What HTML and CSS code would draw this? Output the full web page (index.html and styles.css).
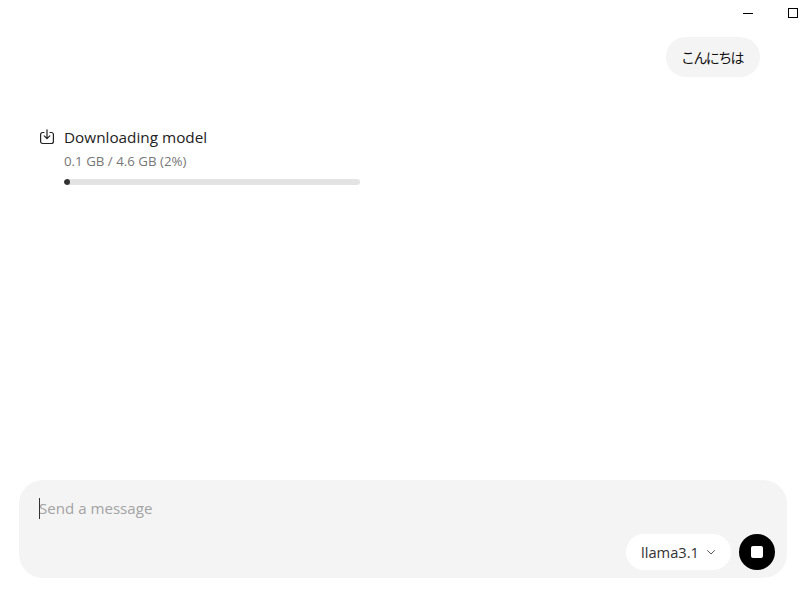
FILE: index.html
```html
<!DOCTYPE html>
<html lang="en">
  <head>
    <meta charset="UTF-8" />
    <meta name="viewport" content="width=device-width, initial-scale=1.0" />
    <title>Chat</title>
    <link rel="stylesheet" href="styles.css">
  </head>
  <body>
    <div class="titlebar">
      <span class="win-min"></span>
      <span class="win-max"></span>
    </div>

    <main class="messages">
      <div class="bubble">こんにちは</div>

      <div class="download">
        <svg class="download-icon" width="16" height="16" viewBox="0 0 16 16" fill="none" stroke="#222" stroke-width="1.2" stroke-linecap="round" stroke-linejoin="round">
          <path d="M5 3.5H3.6A2 2 0 0 0 1.6 5.5v7a2 2 0 0 0 2 2h8.8a2 2 0 0 0 2-2v-7a2 2 0 0 0-2-2H11" />
          <path d="M8 .8v8.6M5.2 6.8 8 9.6l2.8-2.8" />
        </svg>
        <div class="download-info">
          <div class="download-title">Downloading model</div>
          <div class="download-size">0.1 GB / 4.6 GB (2%)</div>
          <div class="progress"><div class="progress-fill" style="width: 2%"></div></div>
        </div>
      </div>
    </main>

    <form class="composer">
      <div class="prompt"><span class="caret"></span>Send a message</div>
      <div class="composer-actions">
        <button class="model" type="button">
          llama3.1
          <svg width="10" height="10" viewBox="0 0 10 10" fill="none" stroke="#555" stroke-width="1" stroke-linecap="round" stroke-linejoin="round">
            <path d="M1.5 3.5 5 7l3.5-3.5" />
          </svg>
        </button>
        <button class="stop" type="button"><span class="stop-square"></span></button>
      </div>
    </form>
  </body>
</html>
```

FILE: styles.css
```css
* {
  box-sizing: border-box;
}

html,
body {
  height: 100%;
}

body {
  margin: 0;
  display: flex;
  flex-direction: column;
  background-color: #fff;
  color: #1a1a1a;
  font-family: "Open Sans", "Noto Sans CJK JP", sans-serif;
  overflow: hidden;
}

.titlebar {
  display: flex;
  justify-content: flex-end;
  align-items: flex-start;
  height: 37px;
  padding: 8px 13px 0 0;
  flex-shrink: 0;
}

.win-min {
  width: 10px;
  height: 1px;
  margin-top: 5px;
  margin-right: 35px;
  background-color: #000;
}

.win-max {
  width: 10px;
  height: 10px;
  border: 1px solid #000;
}

.messages {
  flex: 1;
  display: flex;
  flex-direction: column;
  padding: 0 51px 0 38px;
}

.bubble {
  align-self: flex-end;
  height: 40px;
  padding: 0 17px 0 15px;
  border-radius: 20px;
  background-color: #f4f4f4;
  font-family: "Noto Sans CJK JP", sans-serif;
  font-size: 14px;
  letter-spacing: -1.6px;
  line-height: 40px;
  color: #111;
}

.download {
  display: flex;
  gap: 9px;
  margin-top: 50px;
  padding-left: 1px;
}

.download-icon {
  margin-top: 2px;
  flex-shrink: 0;
}

.download-title {
  font-size: 15.3px;
  line-height: 20px;
  color: #222;
}

.download-size {
  margin-top: 5px;
  font-size: 13.3px;
  line-height: 18px;
  color: #777;
}

.progress {
  width: 296px;
  height: 6px;
  margin-top: 9px;
  border-radius: 3px;
  background-color: #e3e3e3;
  overflow: hidden;
}

.progress-fill {
  height: 100%;
  border-radius: 3px;
  background-color: #333;
}

.composer {
  display: flex;
  flex-direction: column;
  justify-content: space-between;
  height: 98px;
  margin: 0 24px 11px 19px;
  padding: 18px 12px 8px 20px;
  border-radius: 24px;
  background-color: #f4f4f4;
  flex-shrink: 0;
}

.prompt {
  position: relative;
  font-size: 15.1px;
  line-height: 20px;
  color: #a3a3a3;
}

.caret {
  position: absolute;
  left: 0;
  top: 0;
  width: 1px;
  height: 21px;
  background-color: #333;
}

.composer-actions {
  display: flex;
  justify-content: flex-end;
  align-items: center;
  gap: 8px;
}

.model {
  display: flex;
  align-items: center;
  gap: 7px;
  height: 36px;
  padding: 0 15px;
  border: 0;
  border-radius: 18px;
  background-color: #fff;
  font-family: inherit;
  font-size: 14.7px;
  color: #333;
}

.stop {
  display: flex;
  align-items: center;
  justify-content: center;
  width: 36px;
  height: 36px;
  padding: 0;
  border: 0;
  border-radius: 50%;
  background-color: #000;
}

.stop-square {
  width: 12px;
  height: 12px;
  border-radius: 2px;
  background-color: #fff;
}
```
